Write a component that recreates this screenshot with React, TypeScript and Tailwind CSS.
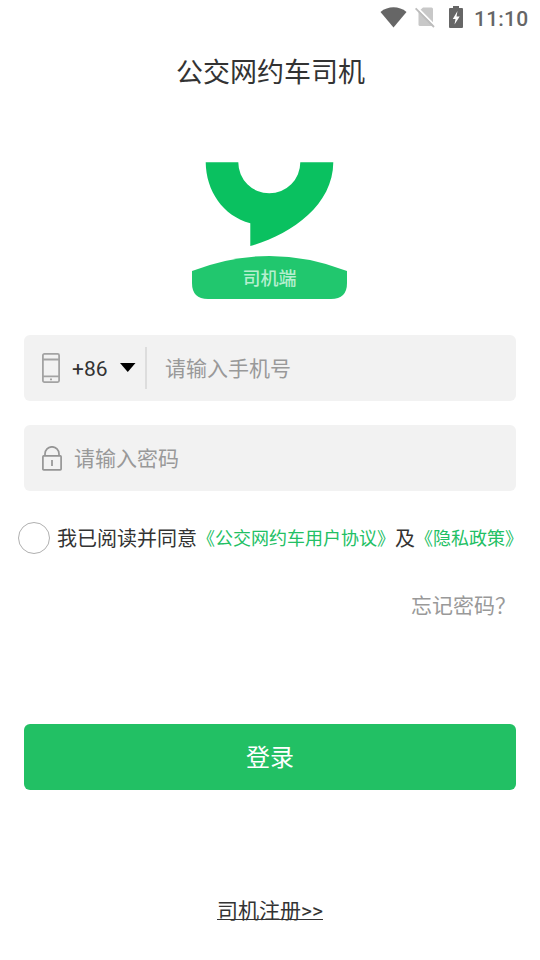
import { useState } from 'react'

const sans = "font-[Roboto,'Noto_Sans_CJK_SC',sans-serif]"

function StatusBar() {
  return (
    <div className="flex h-9 items-center justify-end pr-3 text-[#666666]">
      <svg width="27" height="21" viewBox="0 0 27 21" className="mb-0.5 mr-2">
        <path d="M0.500 5C8 -1.200 19 -1.200 26.500 5L13.500 20.500Z" fill="currentColor" />
      </svg>
      <svg width="20" height="21" viewBox="0 0 20 21" className="mb-0.5 mr-3.5">
        <path d="M8 0.500H16.500Q18 0.500 18 2V17.500Q18 19 16.500 19H5Q3.500 19 3.500 17.500V4.500Z" fill="#c8c8c8" />
        <path d="M1.600 0L20 18.600" stroke="#fff" strokeWidth="2" />
        <path d="M0.600 1.400L19 20" stroke="#bcbcbc" strokeWidth="1.800" />
      </svg>
      <svg width="14" height="22" viewBox="0 0 14 22" className="mb-0.5 mr-[11px]">
        <path d="M4 0H10V2H13Q14 2 14 3V21Q14 22 13 22H1Q0 22 0 21V3Q0 2 1 2H4Z" fill="currentColor" />
        <path d="M8.500 5L3.800 13H6.500L5.500 18.500L10.700 10.500H7.500Z" fill="#fff" />
      </svg>
      <span className="w-[54px] whitespace-nowrap pt-0.5 text-[21px] font-medium leading-6 tracking-[0.2px]">11:10</span>
    </div>
  )
}

function Logo() {
  return (
    <svg width="156" height="137" viewBox="0 0 156 137">
      <path
        d="M13.700 0.300H46.300A31 31 0 0 0 108.300 0.300H141.300C141 44 98 73 58.300 84V61.300C31 54 14 29 13.700 0.300Z"
        fill="#0ac160"
      />
      <path d="M0 109Q77.500 79 155 109V121Q155 137 139 137H16Q0 137 0 121Z" fill="#21c76e" />
      <text
        x="77.500"
        y="123"
        textAnchor="middle"
        fontSize="18"
        fill="#b5efcf"
        fontWeight="500"
      >
        司机端
      </text>
    </svg>
  )
}

function PhoneIcon() {
  return (
    <svg width="18" height="30" viewBox="0 0 18 30" fill="none" stroke="#a3a3a3" strokeWidth="1.800">
      <rect x="0.900" y="0.900" width="16.200" height="28.200" rx="1.500" />
      <path d="M1 6.500H17M1 23.300H17" />
      <path d="M8 26.300H10" />
    </svg>
  )
}

function LockIcon() {
  return (
    <svg width="20" height="25" viewBox="0 0 20 25" fill="none" stroke="#959595" strokeWidth="1.700">
      <rect x="0.900" y="9.900" width="18.200" height="14" rx="0.800" />
      <path d="M3 9.500V7.800A7 7 0 0 1 17 7.800V9.500M10 14V20" />
    </svg>
  )
}

export default function App() {
  const [phone, setPhone] = useState('')
  const [password, setPassword] = useState('')
  const [agreed, setAgreed] = useState(false)

  return (
    <div className={`${sans} flex h-[960px] w-[540px] flex-col overflow-hidden bg-white text-[#333333]`}>
      <StatusBar />
      <h1 className="h-[72px] pl-px pt-px text-center text-[27px] leading-[72px]">公交网约车司机</h1>

      <div className="mt-[54px] pl-48">
        <Logo />
      </div>

      <main className="flex flex-col px-6 pt-9">
        <label className="flex h-[66px] items-center rounded-md bg-[#f2f2f2] pl-[18px]">
          <PhoneIcon />
          <span className="ml-3 w-9 pt-0.5 text-[21px] leading-8">+86</span>
          <svg width="16" height="9" viewBox="0 0 16 9" className="mb-0.5 ml-3">
            <path d="M0 0H15.500L7.750 9Z" fill="#000" />
          </svg>
          <span className="ml-[9px] h-[42px] w-0.5 bg-[#dddddd]" />
          <input
            value={phone}
            onChange={(e) => setPhone(e.target.value)}
            placeholder="请输入手机号"
            className="ml-[18px] h-10 w-[300px] bg-transparent pt-0.5 text-[21px] outline-none placeholder:text-[#999999]"
          />
        </label>

        <label className="mt-6 flex h-[66px] items-center rounded-md bg-[#f2f2f2] pl-[18px]">
          <LockIcon />
          <input
            type="password"
            value={password}
            onChange={(e) => setPassword(e.target.value)}
            placeholder="请输入密码"
            className="ml-3 h-10 w-[380px] bg-transparent pt-0.5 text-[21px] outline-none placeholder:text-[#999999]"
          />
        </label>

        <div className="-mx-1.5 mt-[31px] flex h-8 items-center whitespace-nowrap text-[20px]">
          <button
            onClick={() => setAgreed(!agreed)}
            className="mr-[7px] flex size-8 shrink-0 items-center justify-center rounded-full border-[1.5px] border-[#b0b0b0]"
          >
            {agreed && <span className="size-4 rounded-full bg-[#22c064]" />}
          </button>
          <span className="pt-0.5">我已阅读并同意</span>
          <a className="text-[18px] text-[#22c064]">《公交网约车用户协议》</a>
          <span className="pt-0.5">及</span>
          <a className="text-[18px] text-[#22c064]">《隐私政策》</a>
        </div>

        <a className="mt-9 text-right text-[21px] leading-8 text-[#999999]">忘记密码？</a>

        <button className="mt-[102px] h-[66px] rounded-md bg-[#22c064] pt-0.5 text-[24px] text-white">登录</button>

        <a className="mt-[105px] text-center text-[21px] leading-8 underline decoration-1 [text-decoration-skip-ink:none]">
          司机注册&gt;&gt;
        </a>
      </main>
    </div>
  )
}
